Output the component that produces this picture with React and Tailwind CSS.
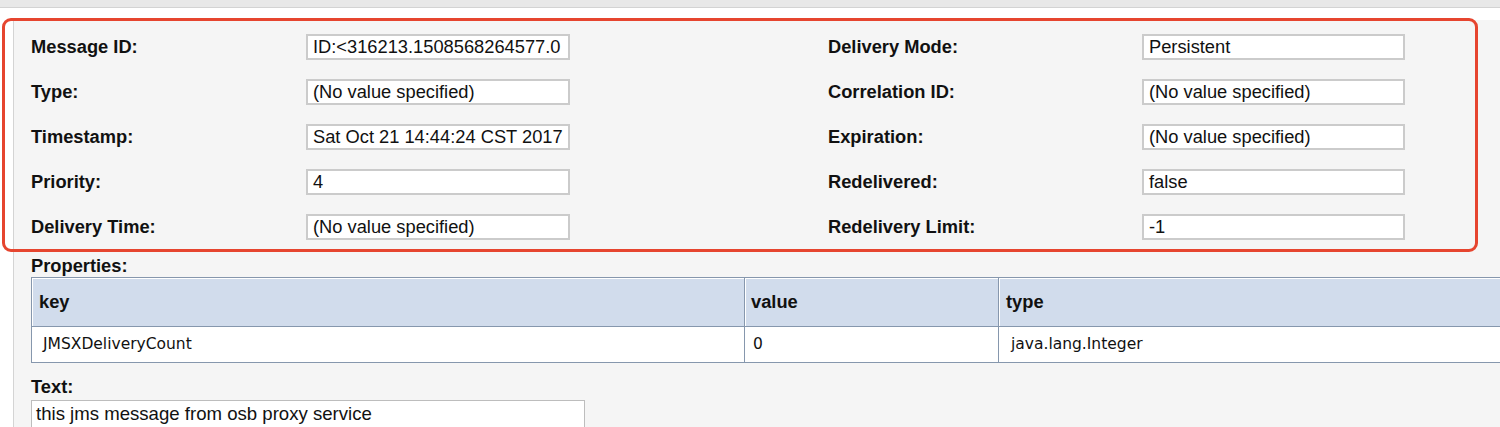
import React from "react";

const left = [
  ["Message ID:", "ID:<316213.1508568264577.0"],
  ["Type:", "(No value specified)"],
  ["Timestamp:", "Sat Oct 21 14:44:24 CST 2017"],
  ["Priority:", "4"],
  ["Delivery Time:", "(No value specified)"],
];
const right = [
  ["Delivery Mode:", "Persistent"],
  ["Correlation ID:", "(No value specified)"],
  ["Expiration:", "(No value specified)"],
  ["Redelivered:", "false"],
  ["Redelivery Limit:", "-1"],
];

function Field({ value }) {
  return (
    <div className="h-[26px] border-[2px] border-[#cbcbcb] bg-white pl-[5px] flex items-center overflow-hidden whitespace-nowrap text-[18.3px] leading-[22px] text-[#111]">
      {value}
    </div>
  );
}

export default function App() {
  return (
    <div className="relative w-[1500px] h-[427px] overflow-hidden bg-white font-['Liberation_Sans',Arial,sans-serif] text-[#111]">
      <div className="h-[8px] bg-[#e8e8e8] border-b border-[#d3d3d3]" />
      <div className="mt-[12px] ml-[13px] h-[420px] border-l border-[#d4d4d4] bg-[#f5f5f5] pl-[17px] pt-[4px]">
        <div className="grid grid-cols-[275px_264px_258px_314px_263px]">
          {left.map((l, i) => (
            <React.Fragment key={i}>
              <div className="h-[45px] flex items-center font-bold text-[18.3px]">{l[0]}</div>
              <div className="h-[45px] flex items-center">
                <div className="w-full"><Field value={l[1]} /></div>
              </div>
              <div />
              <div className="h-[45px] flex items-center font-bold text-[18.3px]">{right[i][0]}</div>
              <div className="h-[45px] flex items-center">
                <div className="w-full"><Field value={right[i][1]} /></div>
              </div>
            </React.Fragment>
          ))}
        </div>
        <div className="mt-[7px] h-[20px] leading-[20px] font-bold text-[18.3px]">Properties:</div>
        <table className="mt-[1px] w-[1520px] border-collapse table-fixed">
          <colgroup>
            <col className="w-[713px]" />
            <col className="w-[254px]" />
            <col />
          </colgroup>
          <thead>
            <tr className="h-[49px] bg-[#d1dcec]">
              <th className="border border-[#8697ad] shadow-[inset_1px_1px_0_#ffffff] text-left pl-[7px] font-bold text-[18.3px]">key</th>
              <th className="border border-[#8697ad] shadow-[inset_1px_1px_0_#ffffff] text-left pl-[6px] font-bold text-[18.3px]">value</th>
              <th className="border border-[#8697ad] shadow-[inset_1px_1px_0_#ffffff] text-left pl-[7px] font-bold text-[18.3px]">type</th>
            </tr>
          </thead>
          <tbody>
            <tr className="h-[36px] bg-white font-['DejaVu_Sans',Verdana,sans-serif] text-[15.5px]">
              <td className="border border-[#8697ad] pl-[11px]">JMSXDeliveryCount</td>
              <td className="border border-[#8697ad] pl-[8px]">0</td>
              <td className="border border-[#8697ad] pl-[12px]">java.lang.Integer</td>
            </tr>
          </tbody>
        </table>
        <div className="mt-[14px] h-[20px] leading-[20px] font-bold text-[18.3px]">Text:</div>
        <div className="mt-[3px] w-[554px] h-[40px] border border-[#bdbdbd] bg-white pl-[4px] pt-[1px] text-[18.6px] leading-[24px]">
          this jms message from osb proxy service
        </div>
      </div>
      <div className="absolute left-[2px] top-[18px] w-[1476px] h-[234px] border-[3px] border-[#e6452f] rounded-[9px] pointer-events-none" />
    </div>
  );
}
